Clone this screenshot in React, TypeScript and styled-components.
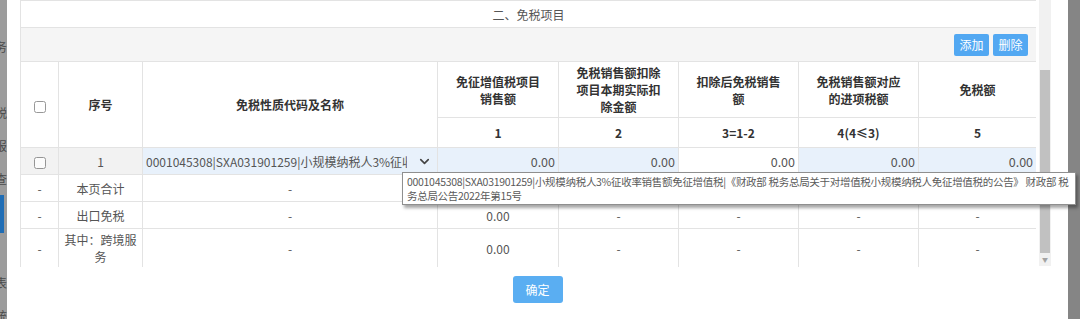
import styled, { createGlobalStyle } from "styled-components";
import { ChevronDown } from "lucide-react";

const GlobalStyle = createGlobalStyle`
  body {
    margin: 0;
    font-family: "Noto Sans CJK SC", "Noto Sans", sans-serif;
  }
`;

const colWidths = [38, 84, 295, 121, 120, 120, 120, 118];

const heads = [
  "免征增值税项目销售额",
  "免税销售额扣除项目本期实际扣除金额",
  "扣除后免税销售额",
  "免税销售额对应的进项税额",
  "免税额",
];
const codes = ["1", "2", "3=1-2", "4(4≤3)", "5"];

const menuChars = ["务", "", "税", "报", "查", "申", "", "表", "统", "务"];

const App = () => {
  return (
    <Page>
      <GlobalStyle />
      <LeftStrip>
        {menuChars.map((c, i) => (
          <MenuItem key={i} $active={i === 5}>
            {c}
          </MenuItem>
        ))}
      </LeftStrip>
      <Modal>
        <ScrollArea>
          <Content>
            <Table>
              <colgroup>
                {colWidths.map((w, i) => (
                  <Col key={i} $w={w} />
                ))}
              </colgroup>
              <tbody>
                <tr>
                  <TitleCell colSpan={8}>二、免税项目</TitleCell>
                </tr>
                <tr>
                  <ToolCell colSpan={8}>
                    <Btn>添加</Btn>
                    <Btn>删除</Btn>
                  </ToolCell>
                </tr>
                <tr>
                  <Head rowSpan={2}>
                    <Check type="checkbox" />
                  </Head>
                  <Head rowSpan={2}>序号</Head>
                  <Head rowSpan={2}>免税性质代码及名称</Head>
                  {heads.map((h) => (
                    <Head key={h} $h={56}>
                      <HeadText>{h}</HeadText>
                    </Head>
                  ))}
                </tr>
                <tr>
                  {codes.map((c) => (
                    <Head key={c} $h={30}>
                      {c}
                    </Head>
                  ))}
                </tr>
                <tr>
                  <Cell $bg="#f2f2f2">
                    <Check type="checkbox" />
                  </Cell>
                  <Cell $bg="#f2f2f2">1</Cell>
                  <SelectCell>
                    <SelectBox>
                      <SelectText>
                        0001045308|SXA031901259|小规模纳税人3%征收率销售额免征增值税
                      </SelectText>
                      <ChevronDown size={15} strokeWidth={2.6} color="#444" />
                    </SelectBox>
                  </SelectCell>
                  <Num $bg="#e8f1fb">0.00</Num>
                  <Num $bg="#e8f1fb">0.00</Num>
                  <Num>0.00</Num>
                  <Num $bg="#e8f1fb">0.00</Num>
                  <Num $bg="#e8f1fb">0.00</Num>
                </tr>
                <tr>
                  <Cell>-</Cell>
                  <Cell>本页合计</Cell>
                  <Cell>-</Cell>
                  <Cell>0.00</Cell>
                  <Cell>-</Cell>
                  <Cell>-</Cell>
                  <Cell>-</Cell>
                  <Cell>-</Cell>
                </tr>
                <tr>
                  <Cell>-</Cell>
                  <Cell>出口免税</Cell>
                  <Cell>-</Cell>
                  <Cell>0.00</Cell>
                  <Cell>-</Cell>
                  <Cell>-</Cell>
                  <Cell>-</Cell>
                  <Cell>-</Cell>
                </tr>
                <tr>
                  <Cell $h={39}>-</Cell>
                  <Cell $h={39}>
                    <WrapText>其中：跨境服务</WrapText>
                  </Cell>
                  <Cell $h={39}>-</Cell>
                  <Cell $h={39}>0.00</Cell>
                  <Cell $h={39}>-</Cell>
                  <Cell $h={39}>-</Cell>
                  <Cell $h={39}>-</Cell>
                  <Cell $h={39}>-</Cell>
                </tr>
              </tbody>
            </Table>
          </Content>
          <Scrollbar>
            <Thumb />
            <Arrow>▼</Arrow>
          </Scrollbar>
        </ScrollArea>
        <Footer>
          <OkBtn>确定</OkBtn>
        </Footer>
      </Modal>
      <Backdrop />
      <Tooltip>
        0001045308|SXA031901259|小规模纳税人3%征收率销售额免征增值税|《财政部 税务总局关于对增值税小规模纳税人免征增值税的公告》 财政部 税
        <br />
        务总局公告2022年第15号
      </Tooltip>
    </Page>
  );
};

const Page = styled.div`
  position: relative;
  display: flex;
  width: 1080px;
  height: 319px;
  overflow: hidden;
  background: #8a8a8a;
`;

const LeftStrip = styled.div`
  width: 7px;
  flex-shrink: 0;
  display: flex;
  flex-direction: column;
  padding-top: 30px;
  background: #9c9c9c;
  overflow: hidden;
`;

const MenuItem = styled.div<{ $active?: boolean }>`
  flex-shrink: 0;
  display: flex;
  align-items: center;
  justify-content: flex-end;
  white-space: nowrap;
  font-size: 12px;
  color: ${(p) => (p.$active ? "#1f6db5" : "#4a4a4a")};
  background: ${(p) => (p.$active ? "#1f6db5" : "transparent")};
  margin-right: ${(p) => (p.$active ? "3px" : "0")};
  margin-left: ${(p) => (p.$active ? "0" : "-7px")};
  height: ${(p) => (p.$active ? "38px" : "33px")};
`;

const Modal = styled.div`
  width: 1061px;
  flex-shrink: 0;
  display: flex;
  flex-direction: column;
  background: #fff;
`;

const Backdrop = styled.div`
  flex: 1;
  background: #858585;
`;

const ScrollArea = styled.div`
  display: flex;
  height: 267px;
`;

const Content = styled.div`
  padding-left: 13px;
  width: 1016px;
  overflow: hidden;
`;

const Table = styled.table`
  width: 1016px;
  table-layout: fixed;
  border-collapse: collapse;
  font-size: 12px;
  color: #555;
`;

const Col = styled.col<{ $w: number }>`
  width: ${(p) => p.$w}px;
`;

const BaseCell = styled.td`
  border: 1px solid #e3e3e3;
  padding: 0;
  text-align: center;
  vertical-align: middle;
  line-height: 17px;
`;

const TitleCell = styled(BaseCell)`
  height: 26px;
  color: #555;
`;

const ToolCell = styled(BaseCell)`
  height: 33px;
  background: #f5f5f5;
  text-align: right;
  padding-right: 8px;
  font-size: 0;
`;

const Btn = styled.button`
  width: 35px;
  height: 22px;
  margin-left: 4px;
  padding: 0;
  border: none;
  border-radius: 2px;
  background: #52a8f2;
  color: #fff;
  font-family: inherit;
  font-size: 12px;
  vertical-align: middle;
`;

const Head = styled(BaseCell).attrs({ as: "th" })<{ $h?: number }>`
  height: ${(p) => (p.$h ? `${p.$h - 1}px` : "auto")};
  font-weight: bold;
  color: #333;
  background: #fff;
`;

const HeadText = styled.div`
  padding: 0 13px;
`;

const Check = styled.input`
  margin: 0;
  width: 12px;
  height: 12px;
  vertical-align: middle;
  opacity: 0.75;
`;

const Cell = styled(BaseCell)<{ $bg?: string; $h?: number }>`
  height: ${(p) => (p.$h ? p.$h - 1 : 26)}px;
  background: ${(p) => p.$bg || "#fff"};
`;

const Num = styled(Cell)`
  text-align: right;
  padding-right: 3px;
  font-size: 12.5px;
`;

const SelectCell = styled(Cell)`
  background: #e8f1fb;
  text-align: left;
`;

const SelectBox = styled.div`
  display: flex;
  align-items: center;
  gap: 10px;
  padding: 0 5px 0 3px;
  color: #555;
  font-size: 12px;
`;

const SelectText = styled.span`
  flex: 1;
  overflow: hidden;
  white-space: nowrap;
`;

const WrapText = styled.div`
  padding: 0 5px;
`;

const Scrollbar = styled.div`
  margin-left: 3px;
  width: 12px;
  height: 266px;
  display: flex;
  flex-direction: column;
  background: #f1f1f1;
`;

const Thumb = styled.div`
  margin: 70px 1px 0;
  height: 183px;
  background: #c1c1c1;
`;

const Arrow = styled.div`
  height: 13px;
  font-size: 6px;
  line-height: 13px;
  text-align: center;
  color: #a3a3a3;
`;

const Footer = styled.div`
  display: flex;
  justify-content: center;
  padding-top: 9px;
`;

const OkBtn = styled.button`
  width: 50px;
  height: 27px;
  padding: 0;
  border: none;
  border-radius: 3px;
  background: #5aaef2;
  color: #fff;
  font-family: inherit;
  font-size: 12px;
`;

const Tooltip = styled.div`
  position: absolute;
  left: 402px;
  top: 172px;
  width: 665px;
  padding: 2px 3px 1px 4px;
  background: #fff;
  border: 1px solid #8f8f8f;
  box-shadow: 2px 3px 3px rgba(0, 0, 0, 0.35);
  font-size: 10.5px;
  letter-spacing: -0.3px;
  line-height: 14px;
  color: #5a5a5a;
  white-space: nowrap;
  overflow: hidden;
`;

export default App;
